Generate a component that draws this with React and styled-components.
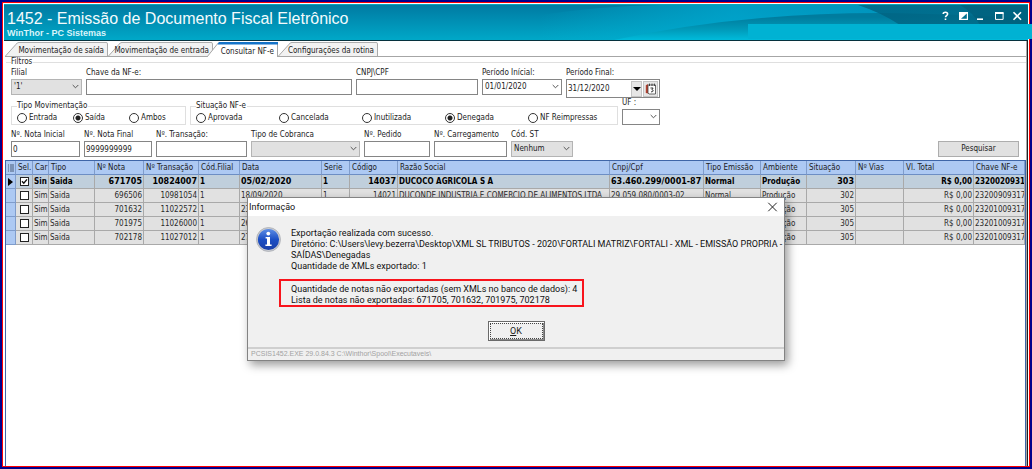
import React from "react";
import styled, { createGlobalStyle, css } from "styled-components";

const GlobalStyle = createGlobalStyle`
  *, *::before, *::after { box-sizing: border-box; }
  body { margin: 0; background: #fff; }
  body, input, select, button {
    font-family: "DejaVu Sans Condensed", "DejaVu Sans", sans-serif;
    font-size: 8px;
    line-height: 10px;
    color: #1c1c1c;
  }
`;

/* ---------- window frame ---------- */

const Screen = styled.div`
  position: relative;
  min-height: 100vh;
  border: 2px solid #00008b;
  display: flex;
  flex-direction: column;
`;

const Frame = styled.div`
  flex: 1;
  display: flex;
  flex-direction: column;
  border: 1px solid #f00;
  padding: 1px 1px 0;
  background: #fff;
`;

const TitleBar = styled.header`
  position: relative;
  height: 36px;
  padding: 6px 5px 0 3px;
  display: flex;
  justify-content: space-between;
  align-items: flex-start;
  background: linear-gradient(#007aa2, #00a8c8);
  border-top: 1px solid #08a4bc;
`;

const Waves = styled.svg`
  position: absolute;
  top: 0;
  right: 0;
  width: 488px;
  height: 35px;
`;

const TitleStrip = styled.div`
  position: absolute;
  right: -4px;
  bottom: 1px;
  width: 284px;
  height: 15px;
  background: #00b2d3;
`;

const Titles = styled.div`
  position: relative;
  font-family: "Liberation Sans", Arial, sans-serif;
  white-space: nowrap;
`;

const Title = styled.h1`
  margin: 0;
  font-size: 16px;
  line-height: 16px;
  font-weight: 400;
  color: #f4fbfd;
`;

const Subtitle = styled.p`
  margin: 1px 0 0;
  font-size: 9px;
  line-height: 10px;
  font-weight: 700;
  color: #d8f4fa;
`;

const WindowButtons = styled.div`
  position: relative;
  display: flex;
  gap: 7px;
`;

const IconButton = styled.button`
  width: 11px;
  height: 10px;
  padding: 0;
  border: 0;
  background: none;
  display: block;
  svg { display: block; width: 100%; height: 100%; }
`;

const Body = styled.main`
  flex: 1;
  display: flex;
  flex-direction: column;
  padding: 0 1px;
  border-top: 1px solid #06323e;
  border-right: 1px solid #222;
  box-shadow: inset -1px 0 #a8a8a8;
`;

/* ---------- tabs ---------- */

const Tabs = styled.nav`
  display: flex;
  align-items: flex-end;
  height: 16px;
  border-bottom: 1px solid #a6a6a6;
`;

const Tab = styled.button`
  position: relative;
  width: ${(p) => p.$width}px;
  height: ${(p) => (p.$active ? 15 : 14)}px;
  margin-bottom: ${(p) => (p.$active ? -1 : 0)}px;
  padding: 4px 4px 0 0;
  border: 0;
  background: none;
  text-align: right;
  white-space: nowrap;
  z-index: ${(p) => (p.$active ? 1 : 0)};
`;

const TabShape = styled.svg`
  position: absolute;
  inset: 0;
  width: 100%;
  height: 100%;
`;

const TabText = styled.span`
  position: relative;
  display: block;
`;

/* ---------- filters ---------- */

const Filters = styled.fieldset`
  margin: 0 0 3px 1px;
  padding: 1px 7px 0 5px;
  min-width: 0;
  border: 0;
  border-top: 1px solid #dfdfdf;
  display: flex;
  flex-direction: column;
`;

const Legend = styled.legend`
  padding: 0 1px 0 0;
  height: 10px;
`;

const FilterRow = styled.div`
  display: flex;
  align-items: ${(p) => p.$align || "flex-start"};
  gap: 4px;
  margin-top: ${(p) => p.$top || 0}px;
`;

const Field = styled.div`
  width: ${(p) => p.$width}px;
  display: flex;
  flex-direction: column;
  gap: 1px;
`;

const FieldLabel = styled.label`
  height: 10px;
  white-space: nowrap;
`;

const boxed = css`
  width: 100%;
  height: 16px;
  margin: 0;
  padding: 0 2px;
  border: 1px solid #858585;
  border-radius: 0;
  background: #fff;
  outline: 0;
`;

const TextInput = styled.input`
  ${boxed}
  padding: 0 1px;
`;

const SelectWrap = styled.div`
  position: relative;
  svg {
    position: absolute;
    right: 3px;
    top: 5px;
    width: 7px;
    height: 5px;
    pointer-events: none;
  }
`;

const SelectBox = styled.select`
  ${boxed}
  appearance: none;
  background: ${(p) => (p.$grey ? "#e1e1e1" : "#fff")};
  border-color: ${(p) => (p.$grey ? "#b4b4b4" : "#858585")};
`;

const DateBox = styled.div`
  display: flex;
  align-items: center;
  height: 19px;
  padding-right: 1px;
  border: 1px solid #858585;
`;

const DateInput = styled.input`
  flex: 1;
  min-width: 0;
  padding: 0 1px;
  border: 0;
  outline: 0;
  background: none;
`;

const DateButton = styled.button`
  width: ${(p) => p.$width}px;
  height: 16px;
  margin-left: 1px;
  padding: 0;
  border: 1px solid #c4c4c4;
  background: #e6e6e6;
  display: grid;
  place-items: center;
`;

const Group = styled.fieldset`
  height: 24px;
  width: ${(p) => p.$width}px;
  margin: 0;
  padding: 2px 4px 0 5px;
  min-width: 0;
  border: 1px solid #dfdfdf;
`;

const Radios = styled.div`
  display: grid;
  grid-template-columns: ${(p) => p.$columns};
`;

const RadioLabel = styled.label`
  display: flex;
  align-items: center;
  gap: 2px;
  white-space: nowrap;
`;

const Radio = styled.input`
  appearance: none;
  width: 10px;
  height: 10px;
  margin: 0;
  border: 1px solid #333;
  border-radius: 50%;
  background: #fff;
  &:checked { background: radial-gradient(circle, #222 0 2px, #fff 3px); }
`;

const SearchButton = styled.button`
  width: 81px;
  height: 16px;
  margin-left: auto;
  padding: 0;
  border: 1px solid #adadad;
  background: #e1e1e1;
`;

/* ---------- results grid ---------- */

const GridArea = styled.section`
  flex: 1;
  overflow: hidden;
  border: 1px solid #3f66a8;
  border-bottom: 0;
  background: #fff;
`;

const Table = styled.table`
  width: 100%;
  table-layout: fixed;
  border-collapse: separate;
  border-spacing: 0;
`;

const Col = styled.col`
  width: ${(p) => (p.$width ? `${p.$width}px` : "auto")};
`;

const cell = css`
  height: 14px;
  padding: 0 1px;
  overflow: hidden;
  white-space: nowrap;
  font-size: 8px;
  line-height: 12px;
`;

const HeadCell = styled.th`
  ${cell}
  padding: 0 2px;
  text-align: left;
  font-weight: 400;
  background: #adc9f3;
  border-right: 1px solid #7f9ccb;
  border-bottom: 1px solid #6d8ec4;
  svg { display: block; }
`;

const Row = styled.tr`
  background: ${(p) => (p.$current ? "#c0cfdc" : "#e1e1e1")};
  font-weight: ${(p) => (p.$current ? 700 : 400)};
  color: ${(p) => (p.$current ? "#000" : "#2a2a2a")};
`;

const Cell = styled.td`
  ${cell}
  text-align: ${(p) => (p.$right ? "right" : "left")};
  border-right: 1px solid #a9a9a9;
  border-bottom: 1px solid #a9a9a9;
  ${(p) => p.$wide && css`font-family: "DejaVu Sans", sans-serif;`}
`;

const MarkerCell = styled(Cell)`
  padding: 0 2px;
  background: #adc9f3;
  border-color: #7f9ccb;
  svg { display: block; }
`;

const Check = styled.input`
  appearance: none;
  display: block;
  width: 9px;
  height: 9px;
  margin: 0;
  border: 1px solid #222;
  background: #fff;
`;

const CheckWrap = styled.div`
  position: relative;
  width: 9px;
  margin: 0 auto;
  svg { position: absolute; inset: 0; pointer-events: none; }
`;

/* ---------- message dialog ---------- */

const Dialog = styled.section`
  position: absolute;
  left: 50%;
  top: 195px;
  width: 538px;
  transform: translateX(-50%);
  border: 1px solid #838383;
  background: #f0f0f0;
  box-shadow: 3px 4px 9px rgba(0, 0, 0, 0.4);
  font-family: Roboto, "Open Sans", sans-serif;
  font-size: 9px;
  line-height: 11px;
  color: #111;
`;

const DialogTitle = styled.header`
  display: flex;
  align-items: center;
  justify-content: space-between;
  height: 18px;
  padding: 0 6px 0 1px;
  background: #fff;
`;

const DialogHeading = styled.h2`
  margin: 0;
  font-size: 9px;
  font-weight: 400;
`;

const DialogBody = styled.div`
  display: flex;
  gap: 10px;
  padding: 11px 0 0 8px;
`;

const InfoIcon = styled.svg`
  flex: none;
  width: 25px;
  height: 25px;
`;

const Message = styled.div`
  padding-top: 1px;
  p { margin: 0; }
`;

const Highlight = styled.div`
  position: relative;
  width: max-content;
  margin-top: 12px;
  &::after {
    content: "";
    position: absolute;
    inset: -5px -7px -1px -12px;
    border: 2px solid #f8141c;
  }
`;

const DialogActions = styled.div`
  display: flex;
  justify-content: center;
  padding: 15px 0 6px;
`;

const OkButton = styled.button`
  width: 57px;
  height: 20px;
  padding: 1px;
  border: 1px solid #6a6a6a;
  background: #f0f0f0;
  box-shadow: inset 1px 1px #fff, inset -1px -1px #8a8a8a;
  font-family: inherit;
  font-size: 9px;
  span {
    display: block;
    line-height: 14px;
    border: 1px dotted #444;
  }
`;

const StatusBar = styled.footer`
  height: 13px;
  padding-left: 3px;
  border-top: 2px solid #cfcfcf;
  font-family: "Liberation Sans", Arial, sans-serif;
  font-size: 7px;
  line-height: 10px;
  color: #a2a2a2;
`;

/* ---------- drawings ---------- */

const Chevron = () => (
  <svg viewBox="0 0 7 5">
    <path d="M.7 1 3.5 3.8 6.3 1" fill="none" stroke="#555" strokeWidth="1" />
  </svg>
);

const Cross = ({ color }) => (
  <svg width="9" height="9" viewBox="0 0 9 9">
    <path d="M.7.7 8.3 8.3M8.3.7.7 8.3" stroke={color} strokeWidth=".9" fill="none" />
  </svg>
);

const CalendarIcon = () => (
  <svg width="12" height="12" viewBox="0 0 12 12">
    <path d="M.8 2.2 3 1v9.5L.8 10z" fill="#b3402f" />
    <path d="M3 2h7.5v9H4L3 10z" fill="#fff" stroke="#444" strokeWidth=".8" />
    <path d="M4.5.6v2.4M7 .6v2.4M9.4.6v2.4" stroke="#333" strokeWidth=".9" />
    <path d="M5.5 5h2.6L6.9 6.8c2 0 1.6 2.4-.9 2" fill="none" stroke="#333" strokeWidth="1" />
  </svg>
);

const HeaderWaves = () => (
  <Waves viewBox="0 0 488 35" preserveAspectRatio="none" aria-hidden="true">
    <defs>
      <linearGradient id="sheen" x1="0" y1="0" x2="1" y2="0">
        <stop offset="0" stopColor="#00b6d6" stopOpacity="0" />
        <stop offset=".4" stopColor="#00a8d0" stopOpacity=".75" />
        <stop offset="1" stopColor="#0091bb" stopOpacity=".7" />
      </linearGradient>
      <linearGradient id="swell" x1="0" y1="0" x2="0" y2="1">
        <stop offset=".15" stopColor="#007c9e" />
        <stop offset=".6" stopColor="#0099b8" />
        <stop offset="1" stopColor="#00bbdb" />
      </linearGradient>
      <linearGradient id="corner" x1="0" y1="0" x2="1" y2="0">
        <stop offset="0" stopColor="#005f7e" stopOpacity=".75" />
        <stop offset="1" stopColor="#006a86" stopOpacity=".8" />
      </linearGradient>
    </defs>
    <path d="M0 10Q60 1 120 0H488V35H0z" fill="url(#sheen)" />
    <path d="M74 35Q200 8 340 8Q430 9 488 14V35z" fill="url(#swell)" />
    <path d="M318 0H488V20H360Q342 8 318 0z" fill="url(#corner)" />
    <path d="M420 0H488V20H440Q434 8 420 0z" fill="#004e68" opacity=".35" />
  </Waves>
);

function SelectField({ id, label, width, value, grey }) {
  return (
    <Field $width={width}>
      <FieldLabel htmlFor={id}>{label}</FieldLabel>
      <SelectWrap>
        <SelectBox id={id} $grey={grey} defaultValue={value}>
          <option>{value}</option>
        </SelectBox>
        <Chevron />
      </SelectWrap>
    </Field>
  );
}

function InputField({ id, label, width, value = "" }) {
  return (
    <Field $width={width}>
      <FieldLabel htmlFor={id}>{label}</FieldLabel>
      <TextInput id={id} defaultValue={value} />
    </Field>
  );
}

function RadioGroup({ name, legend, width, columns, options, checked }) {
  return (
    <Group $width={width}>
      <Legend>{legend}</Legend>
      <Radios $columns={columns}>
        {options.map((o) => (
          <RadioLabel key={o}>
            <Radio type="radio" name={name} defaultChecked={o === checked} />
            {o}
          </RadioLabel>
        ))}
      </Radios>
    </Group>
  );
}

const tabs = [
  { text: "Movimentação de saída", width: 103 },
  { text: "Movimentação de entrada", width: 105 },
  { text: "Consultar NF-e", width: 65, active: true },
  { text: "Configurações da rotina", width: 100 },
];

const columns = [
  { title: "Sel.", width: 17 },
  { title: "Car", width: 16 },
  { title: "Tipo", width: 46 },
  { title: "Nº Nota", width: 49, right: true, wide: true },
  { title: "Nº Transação", width: 55, right: true, wide: true },
  { title: "Cód.Filial", width: 41 },
  { title: "Data", width: 82, wide: true },
  { title: "Serie", width: 28 },
  { title: "Código", width: 48, right: true, wide: true },
  { title: "Razão Social", width: 212 },
  { title: "Cnpj/Cpf", width: 94, wide: true },
  { title: "Tipo Emissão", width: 57 },
  { title: "Ambiente", width: 46 },
  { title: "Situação", width: 49, right: true, wide: true },
  { title: "Nº Vias", width: 48 },
  { title: "Vl. Total", width: 70, right: true },
  { title: "Chave NF-e" },
];

const rows = [
  ["Sin", "Saida", "671705", "10824007", "1", "05/02/2020", "1", "14037", "DUCOCO AGRICOLA S A", "63.460.299/0001-87", "Normal", "Produção", "303", "", "R$ 0,00", "2320020931"],
  ["Sim", "Saida", "696506", "10981054", "1", "18/09/2020", "1", "14021", "DUCONDE INDUSTRIA E COMERCIO DE ALIMENTOS LTDA", "29.059.080/0003-02", "Normal", "Produção", "302", "", "R$ 0,00", "23200909317"],
  ["Sim", "Saida", "701632", "11022572", "1", "23", "", "", "", "", "", "Produção", "305", "", "R$ 0,00", "23201009317"],
  ["Sim", "Saida", "701975", "11026000", "1", "26", "", "", "", "", "", "Produção", "305", "", "R$ 0,00", "23201009317"],
  ["Sim", "Saida", "702178", "11027012", "1", "27", "", "", "", "", "", "Produção", "305", "", "R$ 0,00", "23201009317"],
];

/* The slanted left edge starts before the tab's own box when it is the active one. */
const SLANT = 6;

function TabItem({ tab }) {
  const w = tab.width;
  return (
    <Tab type="button" $width={w} $active={tab.active}>
      <TabShape viewBox={`0 0 ${w} 15`} preserveAspectRatio="none" overflow={tab.active ? "visible" : "hidden"}>
        <path
          d={`M${tab.active ? -SLANT : 0.5} 15 ${tab.active ? 4 : 11} 2.5Q${tab.active ? 5 : 12} .5 ${tab.active ? 7 : 14} .5H${w - 2}Q${w - 0.5} .5 ${w - 0.5} 2V15`}
          fill={tab.active ? "#fff" : "#f2f2f2"}
          stroke="#a6a6a6"
        />
        {tab.active && <path d={`M6 0H${w}V2.4H4.5z`} fill="#1473c8" />}
      </TabShape>
      <TabText>{tab.text}</TabText>
    </Tab>
  );
}

export default function App() {
  return (
    <Screen>
      <GlobalStyle />
      <Frame>
        <TitleBar>
          <HeaderWaves />
          <TitleStrip />
          <Titles>
            <Title>1452 - Emissão de Documento Fiscal Eletrônico</Title>
            <Subtitle>WinThor - PC Sistemas</Subtitle>
          </Titles>
          <WindowButtons>
            <IconButton aria-label="Ajuda">
              <svg viewBox="0 0 11 10">
                <path d="M3.2 3C3.2.6 7.6.6 7.6 3c0 1.5-2.1 1.6-2.1 3.2M5.5 7.4v1.5" fill="none" stroke="#fff" strokeWidth="1.6" />
              </svg>
            </IconButton>
            <IconButton aria-label="Restaurar">
              <svg viewBox="0 0 11 10">
                <path d="M1 1h9v8H1z" fill="#fff" />
                <path d="M3 7.8 8.8 2.6V7.8z" fill="#00708f" />
              </svg>
            </IconButton>
            <IconButton aria-label="Minimizar">
              <svg viewBox="0 0 11 10"><path d="M1 7.4h6v1.6H1z" fill="#fff" /></svg>
            </IconButton>
            <IconButton aria-label="Maximizar">
              <svg viewBox="0 0 11 10">
                <path d="M1.5 2.2h7.6v6.2H1.5z" fill="none" stroke="#fff" />
                <path d="M1 1h8.6v2H1z" fill="#fff" />
              </svg>
            </IconButton>
            <IconButton aria-label="Fechar">
              <svg viewBox="0 0 11 10"><path d="M1.5 1.2 9 8.8M9 1.2 1.5 8.8" stroke="#fff" strokeWidth="1.6" /></svg>
            </IconButton>
          </WindowButtons>
        </TitleBar>

        <Body>
          <Tabs>
            {tabs.map((t) => <TabItem key={t.text} tab={t} />)}
          </Tabs>

          <Filters>
            <Legend>Filtros</Legend>
            <FilterRow>
              <SelectField id="filial" label="Filial" width={71} value="'1'" grey />
              <InputField id="chave" label="Chave da NF-e:" width={266} />
              <InputField id="cnpj" label="CNPJ\CPF" width={122} />
              <SelectField id="inicio" label="Período Inícial:" width={80} value="01/01/2020" />
              <Field $width={94}>
                <FieldLabel htmlFor="fim">Período Final:</FieldLabel>
                <DateBox>
                  <DateInput id="fim" defaultValue="31/12/2020" />
                  <DateButton type="button" $width={11} aria-label="Abrir lista">
                    <svg width="8" height="4" viewBox="0 0 8 4"><path d="M0 0h8L4 4z" fill="#000" /></svg>
                  </DateButton>
                  <DateButton type="button" $width={15} aria-label="Calendário">
                    <CalendarIcon />
                  </DateButton>
                </DateBox>
              </Field>
            </FilterRow>

            <FilterRow $align="flex-end">
              <RadioGroup
                name="tipo" legend="Tipo Movimentação" width={175} columns="56px 56px 1fr"
                options={["Entrada", "Saída", "Ambos"]} checked="Saída"
              />
              <RadioGroup
                name="situacao" legend="Situação NF-e" width={428} columns="83px 83px 83px 83px 1fr"
                options={["Aprovada", "Cancelada", "Inutilizada", "Denegada", "NF Reimpressas"]} checked="Denegada"
              />
              <SelectField id="uf" label="UF :" width={38} value="" />
            </FilterRow>

            <FilterRow $top={5} $align="flex-end">
              <InputField id="nota-inicial" label="Nº. Nota Inicial" width={69} value="0" />
              <InputField id="nota-final" label="Nº. Nota Final" width={68} value="9999999999" />
              <InputField id="transacao" label="Nº. Transação:" width={91} />
              <SelectField id="cobranca" label="Tipo de Cobranca" width={109} value="" grey />
              <InputField id="pedido" label="Nº. Pedido" width={66} />
              <InputField id="carregamento" label="Nº. Carregamento" width={73} />
              <SelectField id="st" label="Cód. ST" width={62} value="Nenhum" grey />
              <SearchButton type="button">Pesquisar</SearchButton>
            </FilterRow>
          </Filters>

          <GridArea>
            <Table>
              <colgroup>
                <Col $width={10} />
                {columns.map((c) => <Col key={c.title} $width={c.width} />)}
              </colgroup>
              <thead>
                <tr>
                  <HeadCell>
                    <svg width="6" height="8" viewBox="0 0 6 8">
                      <path d="M0 1h1M0 3h1M0 5h1M0 7h1M2 1h4M2 3h4M2 5h4M2 7h4" stroke="#40506c" strokeWidth=".9" />
                    </svg>
                  </HeadCell>
                  {columns.map((c) => <HeadCell key={c.title}>{c.title}</HeadCell>)}
                </tr>
              </thead>
              <tbody>
                {rows.map((r, i) => (
                  <Row key={r[2]} $current={i === 0}>
                    <MarkerCell>
                      {i === 0 && <svg width="5" height="8" viewBox="0 0 5 8"><path d="M0 0 5 4 0 8z" fill="#000" /></svg>}
                    </MarkerCell>
                    <Cell>
                      <CheckWrap>
                        <Check type="checkbox" defaultChecked={i === 0} aria-label={`Selecionar nota ${r[2]}`} />
                        {i === 0 && (
                          <svg width="9" height="9" viewBox="0 0 9 9">
                            <path d="M2 4.2 3.8 6.2 7 2.4" fill="none" stroke="#111" strokeWidth="1.4" />
                          </svg>
                        )}
                      </CheckWrap>
                    </Cell>
                    {r.map((v, j) => (
                      <Cell key={j} $right={columns[j + 1].right} $wide={i === 0 && columns[j + 1].wide}>{v}</Cell>
                    ))}
                  </Row>
                ))}
              </tbody>
            </Table>
          </GridArea>
        </Body>
      </Frame>

      <Dialog role="dialog" aria-labelledby="dialog-title">
        <DialogTitle>
          <DialogHeading id="dialog-title">Informação</DialogHeading>
          <IconButton aria-label="Fechar aviso"><Cross color="#222" /></IconButton>
        </DialogTitle>
        <DialogBody>
          <InfoIcon viewBox="0 0 25 25" aria-hidden="true">
            <defs>
              <linearGradient id="ball" x1="0" y1="0" x2="0" y2="1">
                <stop offset="0" stopColor="#5d8ee6" />
                <stop offset=".5" stopColor="#1c4fc4" />
                <stop offset="1" stopColor="#1a3fa8" />
              </linearGradient>
            </defs>
            <circle cx="12.5" cy="12.5" r="12" fill="#c9ccd2" stroke="#9a9da5" strokeWidth=".6" />
            <circle cx="12.5" cy="12.5" r="10.6" fill="url(#ball)" />
            <circle cx="12.3" cy="6.6" r="1.9" fill="#fff" />
            <path d="M9.6 10h4.4v7.6h1.6v1.4H9.4v-1.4H11v-6.2H9.6z" fill="#fff" />
          </InfoIcon>
          <Message>
            <p>Exportação realizada com sucesso.</p>
            <p>Diretório: C:\Users\levy.bezerra\Desktop\XML SL TRIBUTOS - 2020\FORTALI MATRIZ\FORTALI - XML - EMISSÃO PROPRIA - SAÍDAS\Denegadas</p>
            <p>Quantidade de XMLs exportado: 1</p>
            <Highlight>
              <p>Quantidade de notas não exportadas (sem XMLs no banco de dados): 4</p>
              <p>Lista de notas não exportadas: 671705, 701632, 701975, 702178</p>
            </Highlight>
          </Message>
        </DialogBody>
        <DialogActions>
          <OkButton type="button"><span><u>O</u>K</span></OkButton>
        </DialogActions>
        <StatusBar>PCSIS1452.EXE 29.0.84.3 C:\Winthor\Spool\Executaveis\</StatusBar>
      </Dialog>
    </Screen>
  );
}
